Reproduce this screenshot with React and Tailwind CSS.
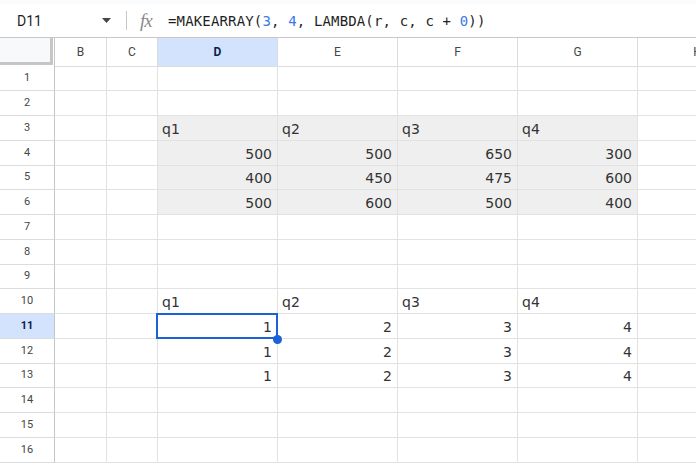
import React from "react";

const COLS = [
  { key: "B", w: "w-[52px]" },
  { key: "C", w: "w-[51px]" },
  { key: "D", w: "w-[120px]" },
  { key: "E", w: "w-[120px]" },
  { key: "F", w: "w-[120px]" },
  { key: "G", w: "w-[120px]" },
  { key: "H", w: "w-[120px]" },
];

const DATA = {
  3: { D: ["q1", "l"], E: ["q2", "l"], F: ["q3", "l"], G: ["q4", "l"] },
  4: { D: ["500", "r"], E: ["500", "r"], F: ["650", "r"], G: ["300", "r"] },
  5: { D: ["400", "r"], E: ["450", "r"], F: ["475", "r"], G: ["600", "r"] },
  6: { D: ["500", "r"], E: ["600", "r"], F: ["500", "r"], G: ["400", "r"] },
  10: { D: ["q1", "l"], E: ["q2", "l"], F: ["q3", "l"], G: ["q4", "l"] },
  11: { D: ["1", "r"], E: ["2", "r"], F: ["3", "r"], G: ["4", "r"] },
  12: { D: ["1", "r"], E: ["2", "r"], F: ["3", "r"], G: ["4", "r"] },
  13: { D: ["1", "r"], E: ["2", "r"], F: ["3", "r"], G: ["4", "r"] },
};

const GRAY_ROWS = [3, 4, 5, 6];
const GRAY_COLS = ["D", "E", "F", "G"];

function Cell({ row, col }) {
  const d = DATA[row] && DATA[row][col.key];
  const gray = GRAY_ROWS.includes(row) && GRAY_COLS.includes(col.key);
  const selected = row === 11 && col.key === "D";
  return (
    <div
      className={
        "relative h-full shrink-0 border-r border-b border-[#e2e2e2] flex items-end pb-[2px] " +
        col.w +
        " " +
        (gray ? "bg-[#efefef] border-[#dddddd] " : "bg-white ") +
        (d && d[1] === "r" ? "justify-end pr-[5px] " : "justify-start pl-[4px] ")
      }
    >
      {d && (
        <span className="text-[14px] leading-[18px] text-[#333333] [font-family:'DejaVu_Sans',Verdana,sans-serif]">
          {d[0]}
        </span>
      )}
      {selected && (
        <>
          <div className="absolute left-[-2px] top-[-1px] right-[-1px] bottom-[-1px] border-2 border-[#1a62d6] pointer-events-none" />
          <div className="absolute right-[-5px] bottom-[-6px] w-[9px] h-[9px] rounded-full bg-[#1a62d6] z-10" />
        </>
      )}
    </div>
  );
}

export default function App() {
  const rows = Array.from({ length: 16 }, (_, i) => i + 1);
  return (
    <div className="w-[696px] h-[464px] overflow-hidden bg-white [font-family:Roboto,Arial,sans-serif]">
      {/* top strip */}
      <div className="h-[4px] bg-[#f9fbfd]" />
      {/* formula bar */}
      <div className="h-[34px] flex items-center border-b border-[#c7c7c7] bg-white">
        <div className="w-[118px] shrink-0 flex items-center pl-[17px] pr-[7px]">
          <span className="text-[14px] text-[#1f1f1f] leading-none">D11</span>
          <div className="flex-1" />
          <svg width="9" height="5" viewBox="0 0 9 5">
            <path d="M0 0 L9 0 L4.5 5 Z" fill="#444746" />
          </svg>
        </div>
        <div className="w-[1px] h-[19px] bg-[#c7c7c7] ml-[8px]" />
        <span className="ml-[13px] w-[17px] text-[19px] leading-none italic text-[#8a8a8a] [font-family:'Liberation_Serif','Times_New_Roman',serif] tracking-[-1px]">
          fx
        </span>
        <span className="ml-[11px] text-[14px] leading-none text-[#1f1f1f] whitespace-pre [font-family:'DejaVu_Sans_Mono','Liberation_Mono',monospace] tracking-[0.15px]">
          =MAKEARRAY(<span className="text-[#3b78e7]">3</span>, <span className="text-[#3b78e7]">4</span>, LAMBDA(r, c, c + <span className="text-[#3b78e7]">0</span>))
        </span>
      </div>
      {/* column header */}
      <div className="h-[28.7px] flex">
        <div className="w-[55px] shrink-0 h-full relative border-r border-[#c7c7c7]">
          <div className="absolute left-0 top-0 w-[53px] h-[27px] bg-[#f8f9fa] border-r-[3px] border-b-[3px] border-[#c4c7c5]" />
        </div>
        {COLS.map((c) => (
          <div
            key={c.key}
            className={
              "h-full shrink-0 flex items-center justify-center border-r border-b border-[#dadce0] text-[12px] " +
              c.w +
              " " +
              (c.key === "D"
                ? "bg-[#d3e3fd] font-bold text-[#0b1f4a]"
                : "bg-white text-[#444746]")
            }
          >
            {c.key}
          </div>
        ))}
      </div>
      {/* rows */}
      {rows.map((r) => (
        <div key={r} className="h-[24.75px] flex">
          <div
            className={
              "w-[55px] shrink-0 h-full flex items-center justify-center border-r border-b border-r-[#c4c7c5] border-b-[#dadce0] text-[11px] " +
              (r === 11
                ? "bg-[#d3e3fd] font-bold text-[#0b1f4a]"
                : "bg-white text-[#444746]")
            }
          >
            {r}
          </div>
          {COLS.map((c) => (
            <Cell key={c.key} row={r} col={c} />
          ))}
        </div>
      ))}
    </div>
  );
}
